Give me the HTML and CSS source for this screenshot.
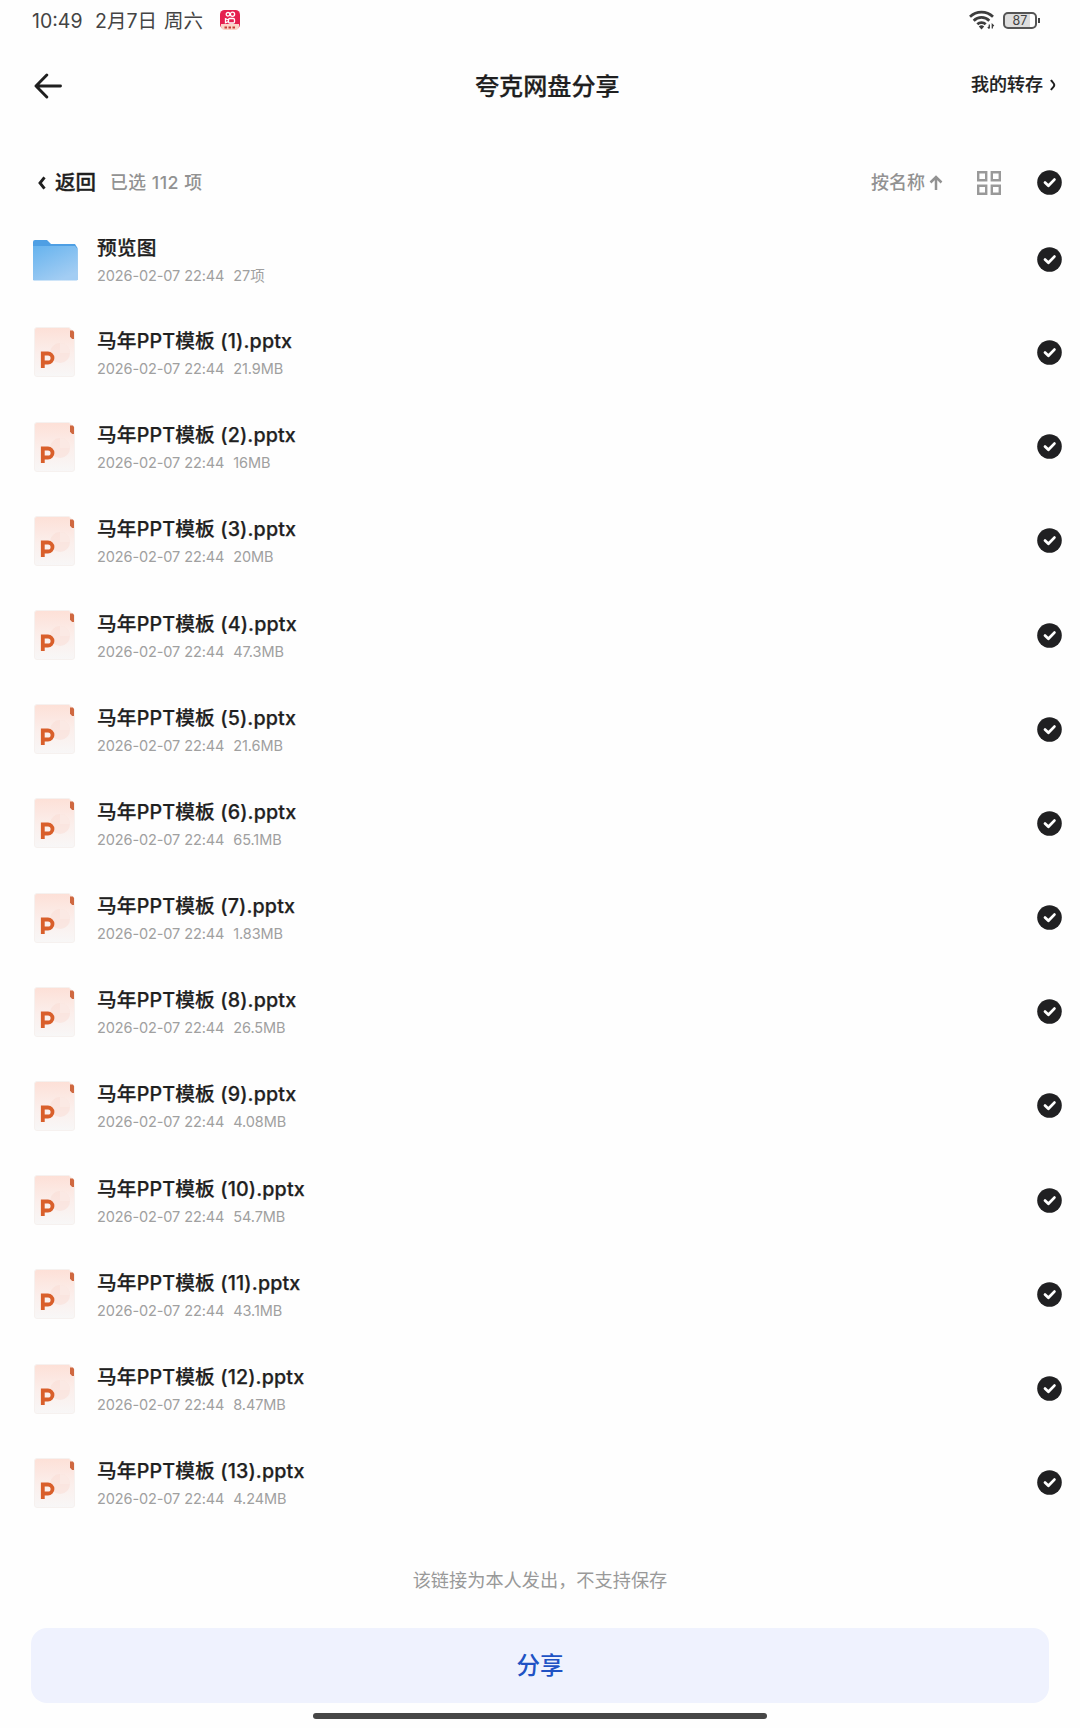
FILE: index.html
```html
<!DOCTYPE html>
<html lang="zh-CN">
  <head>
    <meta charset="UTF-8" />
    <meta name="viewport" content="width=device-width, initial-scale=1.0" />
    <link rel="stylesheet" href="styles.css">
    <title>夸克网盘分享</title>
  </head>
  <body>
    <!-- shared icons -->
    <svg class="sprite" width="0" height="0">
      <defs>
        <linearGradient id="paper" x1="0" y1="0" x2="0" y2="1">
          <stop offset="0" stop-color="#fde0d7" />
          <stop offset="0.55" stop-color="#fbefec" />
          <stop offset="1" stop-color="#f8f7f7" />
        </linearGradient>
        <linearGradient id="folder-front" x1="0" y1="0" x2="0.6" y2="1">
          <stop offset="0" stop-color="#66b3ee" />
          <stop offset="1" stop-color="#a3cdf3" />
        </linearGradient>
      </defs>
      <symbol id="check" viewBox="0 0 25 25">
        <circle cx="12.5" cy="12.5" r="12.3" fill="#202022" />
        <path d="M8 12.6l3.4 3.2 6-6.2" fill="none" stroke="#fff" stroke-width="2.8" stroke-linecap="round" stroke-linejoin="round" />
      </symbol>
      <symbol id="ppt" viewBox="0 0 42 50">
        <path d="M3 .5h32l5.500 5V47a2.500 2.500 0 0 1-2.500 2.500H3A2.500 2.500 0 0 1 .5 47V3A2.500 2.500 0 0 1 3 .5z" fill="url(#paper)" stroke="#f6f1ef" />
        <circle cx="26" cy="26" r="10" fill="#f9dcd4" opacity=".5" />
        <path d="M26 16v10h10a10 10 0 0 0-10-10z" fill="#fbe9e4" />
        <path d="M36 3.500h3L40 5v7h-1.800L36 9.800z" fill="#cf6840" />
        <path d="M8.800 41V26.500h5.200a4.400 4.400 0 0 1 0 9H8.800" fill="none" stroke="#d95f2b" stroke-width="3.800" />
      </symbol>
    </svg>

    <header class="status-bar">
      <span class="time">10:49</span>
      <span class="date">2月7日</span>
      <span class="weekday">周六</span>
      <svg class="app-badge" width="20" height="20" viewBox="0 0 20 20">
        <rect width="20" height="19" rx="4.500" fill="#e5204f" />
        <path d="M1 14h18v2a4 4 0 0 1-4 4H5a4 4 0 0 1-4-4z" fill="#fbd5c8" />
        <g fill="none" stroke="#fff" stroke-width="1.300">
          <circle cx="8" cy="4.300" r="1.800" />
          <circle cx="12.500" cy="4.300" r="2.100" />
          <rect x="8.500" y="8.500" width="6" height="4.500" rx="1.200" />
          <path d="M8.500 10L5.500 8.700v4l3-1.200" />
        </g>
        <path d="M4.500 17.500h2.500m1.500 0H11m1.500 0H15" stroke="#c83a35" stroke-width="2.200" />
      </svg>
      <div class="status-right">
        <svg width="26" height="20" viewBox="0 0 26 20">
          <g fill="none" stroke="#3d3d3d" stroke-width="2.700">
            <path d="M1 6.800a16.500 16.500 0 0 1 23 0" />
            <path d="M4.700 10.700a11 11 0 0 1 15.600 0" />
            <path d="M8.300 14.300a6 6 0 0 1 8.400 0" />
          </g>
          <path d="M9.800 16.500a4 4 0 0 1 5.400 0l-2.700 3z" fill="#3d3d3d" />
          <path d="M20.300 14.500v4m-1.500-1.500l1.500 1.500M23.300 18.500v-4l1.500 1.500" fill="none" stroke="#3d3d3d" stroke-width="1.300" />
        </svg>
        <div class="battery"><span>87</span></div>
      </div>
    </header>

    <nav class="title-bar">
      <svg class="back-arrow" width="28" height="26" viewBox="0 0 28 26">
        <path d="M12.800 2L2 13l10.800 11M2 13h24.500" fill="none" stroke="#1f1f1f" stroke-width="2.900" stroke-linecap="round" stroke-linejoin="round" />
      </svg>
      <h1>夸克网盘分享</h1>
      <a class="my-saves">我的转存
        <svg width="6" height="12" viewBox="0 0 6 12"><path d="M1 1c1 2 3.300 3 3.300 5S2 9 1 11" fill="none" stroke="#1f1f1f" stroke-width="2" /></svg>
      </a>
    </nav>

    <section class="toolbar">
      <svg class="chevron" width="8" height="14" viewBox="0 0 8 14"><path d="M6.500 1.300L2 7l4.500 5.700" fill="none" stroke="#1f1f1f" stroke-width="2.900" /></svg>
      <span class="back">返回</span>
      <span class="selected">已选 112 项</span>
      <span class="sort">按名称</span>
      <svg class="sort-arrow" width="14" height="16" viewBox="0 0 14 16"><path d="M7 15V2M1.500 7.500L7 2l5.500 5.500" fill="none" stroke="#929292" stroke-width="2.500" /></svg>
      <svg class="grid" width="24" height="24" viewBox="0 0 24 24">
        <path d="M1.200 1.200h8v8h-8zM14.800 1.200h8v8h-8zM1.200 14.800h8v8h-8zM14.800 14.800h8v8h-8z" fill="none" stroke="#999" stroke-width="2.400" />
      </svg>
      <svg class="check"><use href="#check" /></svg>
    </section>

    <ul class="file-list">
      <li class="file folder">
        <svg class="icon" width="45" height="41" viewBox="0 0 45 41">
          <path d="M0 2a2 2 0 0 1 2-2h12l4 4h24l2.500 4v32H0z" fill="#4e9fe4" />
          <path d="M0 6h42l2.500 3v30.500a1 1 0 0 1-1 1H1a1 1 0 0 1-1-1z" fill="url(#folder-front)" />
        </svg>
        <div class="info">
          <p class="name">预览图</p>
          <p class="meta"><span>2026-02-07 22:44</span><span>27项</span></p>
        </div>
        <svg class="check"><use href="#check" /></svg>
      </li>
      <li class="file">
        <svg class="icon"><use href="#ppt" /></svg>
        <div class="info">
          <p class="name">马年PPT模板 (1).pptx</p>
          <p class="meta"><span>2026-02-07 22:44</span><span>21.9MB</span></p>
        </div>
        <svg class="check"><use href="#check" /></svg>
      </li>
      <li class="file">
        <svg class="icon"><use href="#ppt" /></svg>
        <div class="info">
          <p class="name">马年PPT模板 (2).pptx</p>
          <p class="meta"><span>2026-02-07 22:44</span><span>16MB</span></p>
        </div>
        <svg class="check"><use href="#check" /></svg>
      </li>
      <li class="file">
        <svg class="icon"><use href="#ppt" /></svg>
        <div class="info">
          <p class="name">马年PPT模板 (3).pptx</p>
          <p class="meta"><span>2026-02-07 22:44</span><span>20MB</span></p>
        </div>
        <svg class="check"><use href="#check" /></svg>
      </li>
      <li class="file">
        <svg class="icon"><use href="#ppt" /></svg>
        <div class="info">
          <p class="name">马年PPT模板 (4).pptx</p>
          <p class="meta"><span>2026-02-07 22:44</span><span>47.3MB</span></p>
        </div>
        <svg class="check"><use href="#check" /></svg>
      </li>
      <li class="file">
        <svg class="icon"><use href="#ppt" /></svg>
        <div class="info">
          <p class="name">马年PPT模板 (5).pptx</p>
          <p class="meta"><span>2026-02-07 22:44</span><span>21.6MB</span></p>
        </div>
        <svg class="check"><use href="#check" /></svg>
      </li>
      <li class="file">
        <svg class="icon"><use href="#ppt" /></svg>
        <div class="info">
          <p class="name">马年PPT模板 (6).pptx</p>
          <p class="meta"><span>2026-02-07 22:44</span><span>65.1MB</span></p>
        </div>
        <svg class="check"><use href="#check" /></svg>
      </li>
      <li class="file">
        <svg class="icon"><use href="#ppt" /></svg>
        <div class="info">
          <p class="name">马年PPT模板 (7).pptx</p>
          <p class="meta"><span>2026-02-07 22:44</span><span>1.83MB</span></p>
        </div>
        <svg class="check"><use href="#check" /></svg>
      </li>
      <li class="file">
        <svg class="icon"><use href="#ppt" /></svg>
        <div class="info">
          <p class="name">马年PPT模板 (8).pptx</p>
          <p class="meta"><span>2026-02-07 22:44</span><span>26.5MB</span></p>
        </div>
        <svg class="check"><use href="#check" /></svg>
      </li>
      <li class="file">
        <svg class="icon"><use href="#ppt" /></svg>
        <div class="info">
          <p class="name">马年PPT模板 (9).pptx</p>
          <p class="meta"><span>2026-02-07 22:44</span><span>4.08MB</span></p>
        </div>
        <svg class="check"><use href="#check" /></svg>
      </li>
      <li class="file">
        <svg class="icon"><use href="#ppt" /></svg>
        <div class="info">
          <p class="name">马年PPT模板 (10).pptx</p>
          <p class="meta"><span>2026-02-07 22:44</span><span>54.7MB</span></p>
        </div>
        <svg class="check"><use href="#check" /></svg>
      </li>
      <li class="file">
        <svg class="icon"><use href="#ppt" /></svg>
        <div class="info">
          <p class="name">马年PPT模板 (11).pptx</p>
          <p class="meta"><span>2026-02-07 22:44</span><span>43.1MB</span></p>
        </div>
        <svg class="check"><use href="#check" /></svg>
      </li>
      <li class="file">
        <svg class="icon"><use href="#ppt" /></svg>
        <div class="info">
          <p class="name">马年PPT模板 (12).pptx</p>
          <p class="meta"><span>2026-02-07 22:44</span><span>8.47MB</span></p>
        </div>
        <svg class="check"><use href="#check" /></svg>
      </li>
      <li class="file">
        <svg class="icon"><use href="#ppt" /></svg>
        <div class="info">
          <p class="name">马年PPT模板 (13).pptx</p>
          <p class="meta"><span>2026-02-07 22:44</span><span>4.24MB</span></p>
        </div>
        <svg class="check"><use href="#check" /></svg>
      </li>
    </ul>

    <footer>
      <p class="notice">该链接为本人发出，不支持保存</p>
      <button class="share">分享</button>
      <div class="home-indicator"></div>
    </footer>
  </body>
</html>
```
FILE: styles.css
```css
* {
  margin: 0;
  padding: 0;
  box-sizing: border-box;
}
body {
  height: 1728px;
  display: flex;
  flex-direction: column;
  background: #fefefe;
  color: #1f1f1f;
  font-family: Inter, "Noto Sans CJK SC", sans-serif;
  overflow: hidden;
}
svg {
  flex: none;
  display: block;
}
.sprite {
  position: absolute;
}
.status-bar {
  height: 40px;
  display: flex;
  align-items: center;
  padding: 0 39px 0 32px;
  font-size: 19.5px;
  line-height: 38px;
  color: #444;
  white-space: nowrap;
}
.time,
.date,
.weekday {
  padding-top: 1px;
}
.time {
  width: 63px;
}
.date {
  width: 69px;
}
.weekday {
  width: 56px;
}
.status-right {
  margin-left: auto;
  display: flex;
  align-items: center;
  gap: 8px;
}
.battery {
  width: 34px;
  height: 17px;
  margin-right: 4px;
  border: 2px solid #555;
  border-radius: 5px;
  background: linear-gradient(90deg, #dedede 82%, #fff 82%);
  font-size: 12.5px;
  line-height: 13px;
  text-align: center;
  position: relative;
}
.battery::after {
  content: "";
  position: absolute;
  right: -5px;
  top: 4px;
  width: 2px;
  height: 5px;
  background: #444;
}
.title-bar {
  height: 92px;
  display: flex;
  align-items: center;
  padding: 0 24px 0 34px;
}
h1 {
  margin-left: 413px;
  padding-top: 2px;
  font-size: 24.1px;
  line-height: 36px;
  font-weight: 500;
  -webkit-text-stroke: 0.25px;
}
.my-saves {
  margin-left: auto;
  margin-top: -2px;
  display: flex;
  align-items: center;
  gap: 7px;
  font-size: 18px;
  line-height: 26px;
  font-weight: 500;
  -webkit-text-stroke: 0.2px;
}
.toolbar {
  height: 82px;
  margin-bottom: -1px;
  padding: 19px 18px 0 38px;
  display: flex;
  align-items: center;
  line-height: 28px;
  color: #929292;
  font-weight: 500;
}
.back {
  margin-left: 9px;
  width: 55px;
  font-size: 20.5px;
  color: #1f1f1f;
  -webkit-text-stroke: 0.3px;
}
.selected {
  font-size: 17.8px;
  letter-spacing: 0.5px;
}
.sort {
  margin-left: auto;
  font-size: 18px;
}
.sort-arrow {
  margin-left: 4px;
}
.grid {
  margin: 0 36px 0 34px;
}
.check {
  width: 25px;
  height: 25px;
}
.file-list {
  list-style: none;
}
.file {
  height: 94.19px;
  padding: 0 18px 0 34px;
  display: flex;
  align-items: center;
}
.folder {
  height: 92.4px;
}
.icon {
  width: 42px;
  height: 50px;
}
.info {
  margin-left: 21px;
  flex: 1;
  padding-top: 5px;
}
.folder .icon {
  width: 45px;
  height: 41px;
  margin: 2px 0 0 -1px;
}
.folder .info {
  margin-left: 19px;
  padding-top: 6px;
}
.name {
  font-size: 19.7px;
  line-height: 28px;
  font-weight: 500;
  letter-spacing: 0.14px;
  -webkit-text-stroke: 0.25px;
}
.meta {
  display: flex;
  gap: 9px;
  font-size: 14.5px;
  line-height: 28px;
  letter-spacing: -0.1px;
  color: #a0a0a0;
}
footer {
  display: flex;
  flex-direction: column;
  align-items: center;
  padding: 36px 31px 0;
}
.notice {
  font-size: 18.2px;
  line-height: 28px;
  color: #999;
}
.share {
  width: 100%;
  height: 75px;
  margin-top: 34px;
  border: none;
  border-radius: 16px;
  background: #eff2fe;
  color: #2052c4;
  font: 500 23.5px/75px Inter, "Noto Sans CJK SC", sans-serif;
}
.home-indicator {
  width: 454px;
  height: 6px;
  margin-top: 10px;
  border-radius: 3px;
  background: #464646;
}
```
